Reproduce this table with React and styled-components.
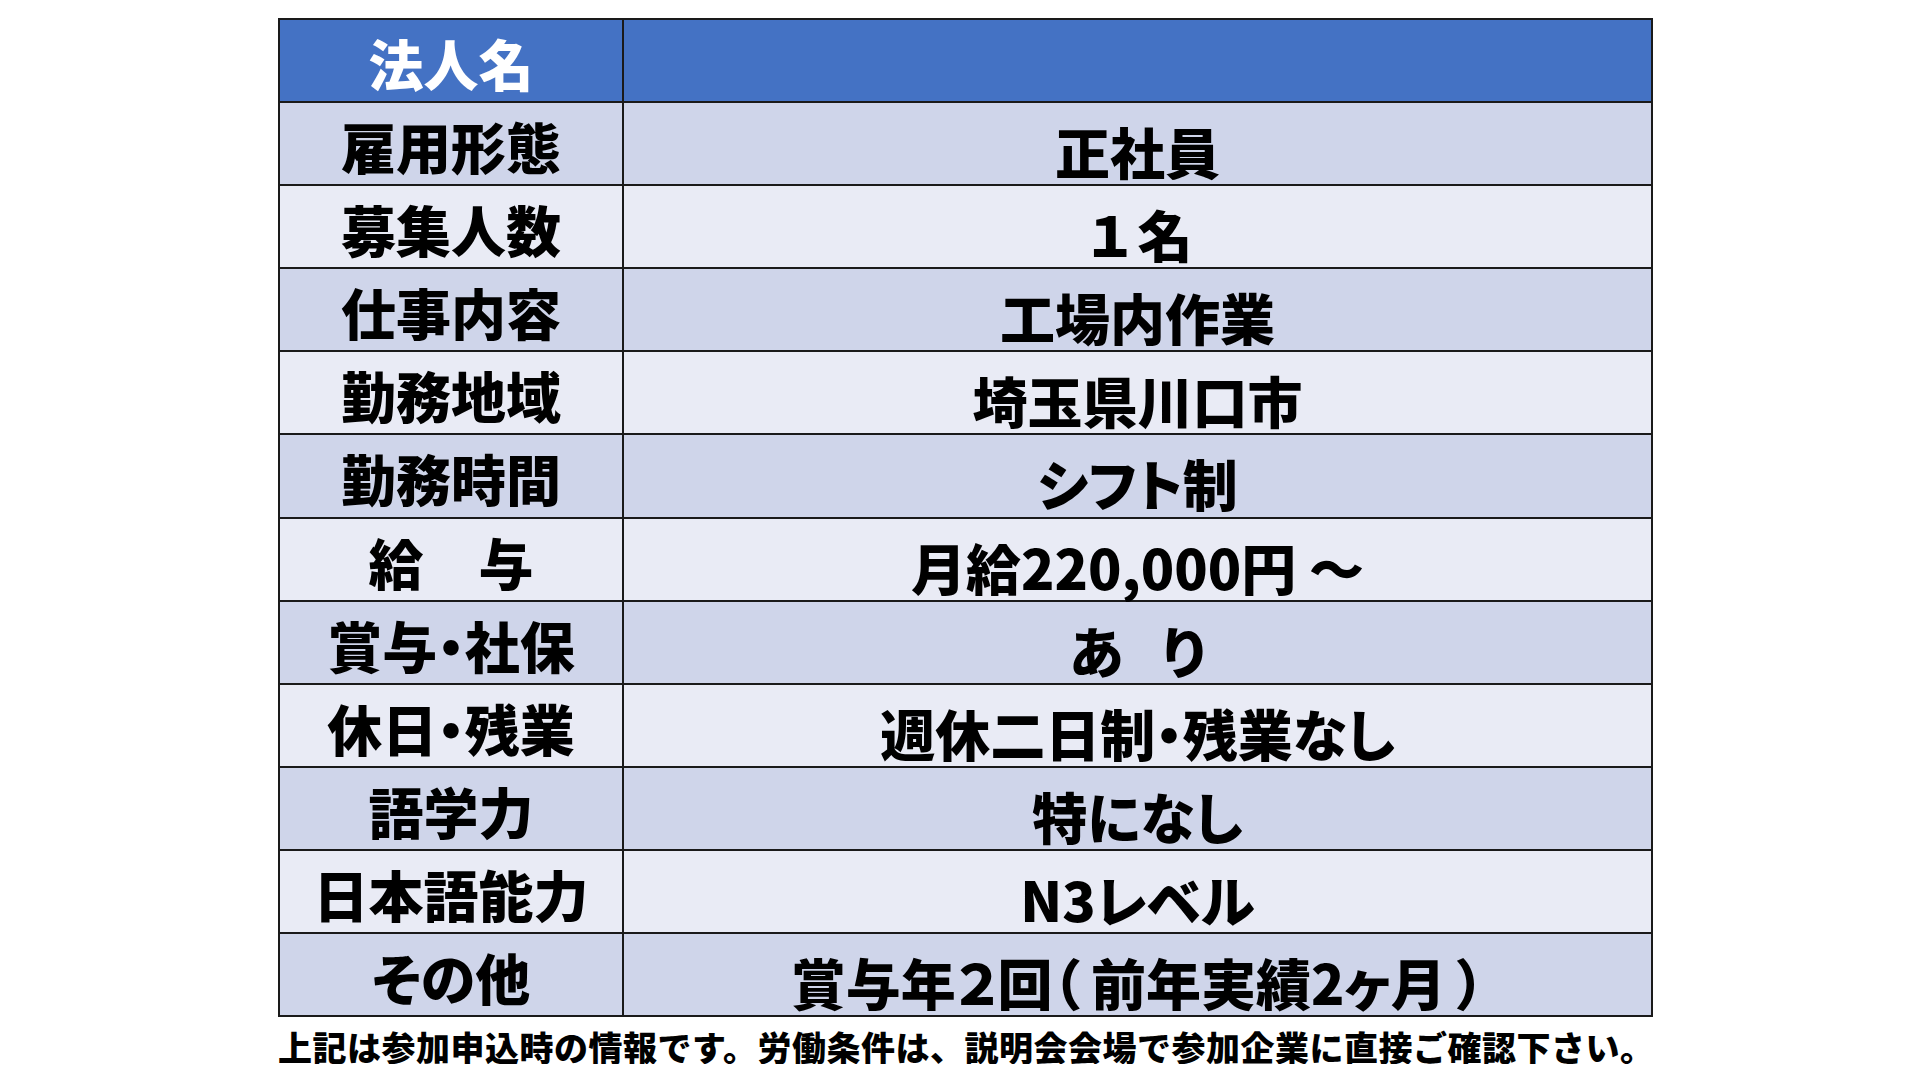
import React from 'react'
import styled, { createGlobalStyle } from 'styled-components'

const GlobalStyle = createGlobalStyle`
  html, body {
    margin: 0;
    padding: 0;
    background: #ffffff;
  }
  body {
    font-family: 'Noto Sans CJK JP', 'Noto Sans', sans-serif;
    color: #000;
  }
`

const tones = {
  head: '#4472c4',
  dark: '#cfd5ea',
  light: '#e9ebf5',
}

const Page = styled.div`
  padding: 18px 0 0 278px;
`

const Sheet = styled.div`
  display: grid;
  grid-template-columns: 342px 1fr;
  grid-auto-rows: 1fr;
  gap: 2px;
  width: 1375px;
  height: 999px;
  box-sizing: border-box;
  border: 2px solid #1a1a1a;
  background: #1a1a1a;
`

const Cell = styled.div`
  display: flex;
  align-items: center;
  justify-content: center;
  box-sizing: border-box;
  padding-top: ${(p) => (p.$value ? 14 : 4)}px;
  background: ${(p) => tones[p.$tone]};
  color: ${(p) => (p.$tone === 'head' ? '#ffffff' : '#000000')};
  font-size: 55px;
  font-weight: 900;
  line-height: 1;
  white-space: pre;
  font-feature-settings: ${(p) => (p.$plain ? 'normal' : "'palt' 1")};
`

const Note = styled.p`
  margin: 13px 0 0;
  font-size: 34px;
  font-weight: 900;
  line-height: 34px;
  letter-spacing: 0.5px;
  white-space: nowrap;
`

const rows = [
  { label: '法人名', value: '' },
  { label: '雇用形態', value: '正社員' },
  { label: '募集人数', value: '１名', plain: true },
  { label: '仕事内容', value: '工場内作業' },
  { label: '勤務地域', value: '埼玉県川口市' },
  { label: '勤務時間', value: 'シフト制' },
  { label: '給　与', value: '月給220,000円 ～' },
  { label: '賞与・社保', value: 'あ\u2002\u2009り' },
  { label: '休日・残業', value: '週休二日制・残業なし' },
  { label: '語学力', value: '特になし' },
  { label: '日本語能力', value: 'N3レベル' },
  { label: 'その他', value: '賞与年２回（\u2009前年実績2ヶ月\u2009）' },
]

function toneFor(i) {
  if (i === 0) return 'head'
  return i % 2 === 1 ? 'dark' : 'light'
}

export default function App() {
  return (
    <Page>
      <GlobalStyle />
      <Sheet>
        {rows.map((row, i) => (
          <React.Fragment key={row.label}>
            <Cell $tone={toneFor(i)}>{row.label}</Cell>
            <Cell $tone={toneFor(i)} $value $plain={row.plain}>
              {row.value}
            </Cell>
          </React.Fragment>
        ))}
      </Sheet>
      <Note>
        上記は参加申込時の情報です。労働条件は、説明会会場で参加企業に直接ご確認下さい。
      </Note>
    </Page>
  )
}
